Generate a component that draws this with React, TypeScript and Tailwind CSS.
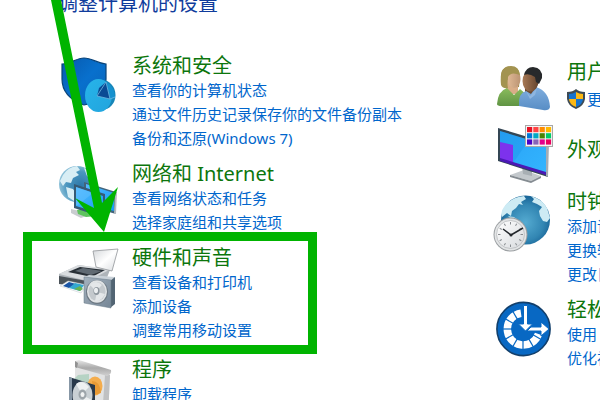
import type { ReactNode } from "react";

interface CategoryProps {
  title: string;
  links?: string[];
  icon: ReactNode;
  highlighted?: boolean;
}

function Category({ title, links = [], icon, highlighted }: CategoryProps) {
  return (
    <section className={highlighted ? "relative flex gap-[14px] pb-1" : "flex gap-[14px]"}>
      {icon}
      <div>
        <CategoryTitle>{title}</CategoryTitle>
        <ul>
          {links.map((link) => (
            <li key={link}>
              <TaskLink>{link}</TaskLink>
            </li>
          ))}
        </ul>
      </div>
      {highlighted && (
        <div className="pointer-events-none absolute -top-[14px] -bottom-2 -left-[35px] w-[294px] border-9 border-[#00b400]" />
      )}
    </section>
  );
}

function CategoryTitle({ children }: { children: ReactNode }) {
  return (
    <h2 className="text-[20px] leading-6">
      <a href="#" className="text-[#0c760c]">{children}</a>
    </h2>
  );
}

function TaskLink({ children }: { children: ReactNode }) {
  return (
    <a href="#" className="block text-[15px] leading-6 text-[#0066cc]">
      {children}
    </a>
  );
}

function SecurityIcon() {
  return (
    <svg viewBox="0 0 60 60" className="h-15 w-15 shrink-0 overflow-visible" aria-hidden="true">
      <defs>
        <linearGradient id="shield" x1="0" y1="0" x2="1" y2="1">
          <stop offset="0" stopColor="#0759ae" />
          <stop offset=".5" stopColor="#0870cd" />
          <stop offset="1" stopColor="#0b63b6" />
        </linearGradient>
        <linearGradient id="pie" x1="0" y1="0" x2="1" y2="1">
          <stop offset="0" stopColor="#27b4ea" />
          <stop offset="1" stopColor="#22a4dd" />
        </linearGradient>
      </defs>
      <path d="M4 10C13 10 18 4 26 4S38 9 48 10V25C48 39 38 49 26 51C12 46 4 37 4 25Z" fill="url(#shield)" stroke="#0a4479" strokeWidth="1.2" />
      <ellipse cx="44" cy="41" rx="13.500" ry="15" fill="#1786b8" />
      <ellipse cx="40.500" cy="41.500" rx="13.500" ry="16.500" fill="url(#pie)" />
      <path d="M39 42L48 28Q57 33 57 44L52 45Z" fill="#1591cf" />
      <path d="M39 42L41 34L48 28L52 45Z" fill="#0a4a94" />
      <path d="M39 42L48 28L52 45ZM52 45L57 43" fill="none" stroke="#70b8df" strokeWidth=".8" />
    </svg>
  );
}

function NetworkIcon() {
  return (
    <svg viewBox="0 0 60 60" className="h-15 w-15 shrink-0 overflow-visible" aria-hidden="true">
      <defs>
        <radialGradient id="globe" cx=".6" cy=".55" r=".6">
          <stop offset="0" stopColor="#2d78aa" />
          <stop offset=".65" stopColor="#4b96bf" />
          <stop offset="1" stopColor="#8fc2d9" />
        </radialGradient>
        <linearGradient id="netScreen" x1="0" y1="0" x2="1" y2="1">
          <stop offset="0" stopColor="#54baff" />
          <stop offset="1" stopColor="#159df4" />
        </linearGradient>
      </defs>
      <circle cx="19" cy="22" r="18" fill="url(#globe)" />
      <path d="M5 13Q10 5 19 4L22 8L18 10L21 13L15 16L13 21L8 20L5 24L2 19ZM26 6L34 11L35 18L29 14ZM8 25L15 27L19 33L16 39L10 35Z" fill="#d8eef5" />
      <path d="M13 47L22 49L31 53L23 56L13 51Z" fill="#c9cdd0" />
      <path d="M19 48L31 46L39 54L28 55L20 52Z" fill="#5fc35f" />
      <path d="M26 20L58 30V52L26 43Z" fill="#42647c" />
      <path d="M28 22L56 31V49L28 41Z" fill="url(#netScreen)" />
      <path d="M57 30L59 30L58 52L56 52Z" fill="#b4bbc0" />
      <path d="M16 22L47 32V56L16 46Z" fill="#365a75" />
      <path d="M18 25L45 34V52L18 44Z" fill="url(#netScreen)" />
      <path d="M18 25L35 31L20 43L18 43Z" fill="#66c2ff" opacity=".5" />
    </svg>
  );
}

function HardwareIcon() {
  return (
    <svg viewBox="0 0 60 60" className="h-15 w-15 shrink-0 overflow-visible" aria-hidden="true">
      <defs>
        <linearGradient id="paper" x1="0" y1="0" x2="1" y2="1">
          <stop offset="0" stopColor="#d4d7da" />
          <stop offset=".5" stopColor="#ffffff" />
          <stop offset="1" stopColor="#d9dcdf" />
        </linearGradient>
        <linearGradient id="speakerBox" x1="0" y1="0" x2="1" y2="1">
          <stop offset="0" stopColor="#a4b1bd" />
          <stop offset="1" stopColor="#758696" />
        </linearGradient>
      </defs>
      <path d="M1 28L21 19L52 24L48 34L29 43L1 37Z" fill="#aeb4b9" />
      <path d="M1 30L29 35L28 42L1 38Z" fill="#4b5359" />
      <path d="M1 28L20 19L53 23L30 35Z" fill="#d9dcdf" />
      <path d="M10 26L22 21L47 24L34 31Z" fill="#282f36" />
      <path d="M17 25L25 22L44 25L33 29Z" fill="#606a73" />
      <path d="M35 5L60 3L54 25L38 21Z" fill="url(#paper)" stroke="#929699" strokeWidth=".8" />
      <path d="M2 40L10 35L29 39L23 47Z" fill="#f7fafb" stroke="#c4cacf" strokeWidth=".5" />
      <path d="M5 40L11 36L18 38L11 42Z" fill="#1a55a6" />
      <path d="M11 42L17 37L26 39L22 45Z" fill="#34a8d0" />
      <path d="M16 43L22 40L25 43L22 45Z" fill="#66b353" />
      <path d="M26 31L31 29L57 31L53 35Z" fill="#c9d1d8" />
      <path d="M52 35L57 31V58L52 62Z" fill="#526473" />
      <path d="M26 31L53 34V62L26 57Z" fill="url(#speakerBox)" stroke="#677887" strokeWidth=".5" />
      <ellipse cx="39" cy="46" rx="11" ry="12" fill="#6d7983" />
      <ellipse cx="39" cy="45.500" rx="10" ry="11.200" fill="#e1e4e6" />
      <ellipse cx="39" cy="45.500" rx="8.500" ry="9.500" fill="#c4c9cd" />
      <path d="M38 45L32 39Q38 33 44 39ZM39 46L47 48Q43 56 37 55Z" fill="#e4e7e9" />
      <ellipse cx="38.500" cy="45" rx="3" ry="4" fill="#8d969d" />
      <ellipse cx="38" cy="44.500" rx="2" ry="2.800" fill="#eceff1" />
    </svg>
  );
}

function ProgramsIcon() {
  return (
    <svg viewBox="0 0 60 60" className="h-15 w-15 shrink-0 overflow-visible" aria-hidden="true">
      <defs>
        <linearGradient id="roller" x1="0" y1="0" x2="0" y2="1">
          <stop offset="0" stopColor="#e8e8e8" />
          <stop offset=".5" stopColor="#aaaaaa" />
          <stop offset="1" stopColor="#d2d2d2" />
        </linearGradient>
      </defs>
      <path d="M17 8L52 18L50 60H17Z" fill="#e2e3e3" />
      <path d="M47 17L52 17L50 60H44Z" fill="#c0c1c2" />
      <path d="M20 17L31 16V32H15L17 20Z" fill="#b6d3c4" />
      <ellipse cx="37" cy="28" rx="7.500" ry="9.500" fill="#f4ad4d" />
      <path d="M34 23Q42 23 43 35L36 37Z" fill="#e89a35" />
      <path d="M17 3L21 2L53 12Q54 16 49 18L17 9Z" fill="url(#roller)" />
      <path d="M17 3L20 5L19 10L17 9Z" fill="#929292" />
      <path d="M11 19L37 27V58L11 51Z" fill="#28384a" />
      <path d="M11 19L14 20V52L11 51Z" fill="#8797a6" />
      <ellipse cx="24.500" cy="37" rx="10" ry="13.500" fill="#c9d0d4" />
      <path d="M24 36L18 26Q24 21 31 29ZM24 37L34 42L29 50Z" fill="#edf0f1" />
      <ellipse cx="24.500" cy="36.500" rx="4" ry="5" fill="#9da5aa" />
      <ellipse cx="24.500" cy="36.500" rx="2" ry="2.500" fill="#f1f3f3" />
    </svg>
  );
}

function UsersIcon() {
  return (
    <svg viewBox="0 0 60 48" className="h-12 w-15 shrink-0 overflow-visible" aria-hidden="true">
      <defs>
        <linearGradient id="greenShirt" x1="0" y1="0" x2="0" y2="1">
          <stop offset="0" stopColor="#8abc5d" />
          <stop offset="1" stopColor="#609444" />
        </linearGradient>
        <linearGradient id="blueShirt" x1="0" y1="0" x2="0" y2="1">
          <stop offset="0" stopColor="#80aede" />
          <stop offset="1" stopColor="#588dc5" />
        </linearGradient>
        <linearGradient id="fairFace" x1="0" y1="0" x2="1" y2="0">
          <stop offset="0" stopColor="#e0b995" />
          <stop offset="1" stopColor="#bb9473" />
        </linearGradient>
        <linearGradient id="darkFace" x1="0" y1="0" x2="1" y2="0">
          <stop offset="0" stopColor="#a97a56" />
          <stop offset="1" stopColor="#63432d" />
        </linearGradient>
      </defs>
      <path d="M9 24Q5 8 15 7Q26 5 27 16L26 27L14 29Z" fill="#9c8a48" />
      <path d="M14 20H25V34H14Z" fill="#d9ad87" />
      <path d="M4 44Q5 31 14 28L21 35L27 29L34 35L29 46H9Q4 46 4 44Z" fill="url(#greenShirt)" />
      <ellipse cx="21" cy="19" rx="6.500" ry="9" fill="url(#fairFace)" />
      <path d="M8 25Q6 6 18 6Q26 6 27 15Q18 11 15 17Q14 24 15 28Q10 29 8 25Z" fill="#a39350" />
      <path d="M32 22H44V34L37 36L32 33Z" fill="#6d492f" />
      <path d="M26 46Q25 33 33 31L38 34L43 27Q56 31 57 47Q56 51 50 50Z" fill="url(#blueShirt)" />
      <ellipse cx="37.500" cy="21" rx="8" ry="10.500" fill="url(#darkFace)" />
      <path d="M31 15Q33 7 40 7Q50 8 49 18L46 24L43 22L42 17Q36 13 31 15Z" fill="#27292b" />
      <path d="M33 31L37 36L44 28L42 35L37 39Z" fill="#8fb6e0" />
    </svg>
  );
}

function ShieldIcon() {
  return (
    <svg viewBox="0 0 18 20" className="h-5 w-[18px] shrink-0" aria-hidden="true">
      <path d="M0 3Q6 3 9 0Q12 3 18 3V10Q17 17 9 20Q1 17 0 10Z" fill="#3e4b55" />
      <path d="M2 5Q6 5 9 3V10H2Z" fill="#1673cf" />
      <path d="M9 3Q12 5 16 5V10H9Z" fill="#fcb814" />
      <path d="M2 10H9V18Q2 15 2 10Z" fill="#fcb814" />
      <path d="M9 10H16Q16 15 9 18Z" fill="#1673cf" />
    </svg>
  );
}

const swatches = [
  "#e81123", "#ff4343", "#ff8c00", "#ffb900",
  "#0078d7", "#00a9c4", "#498205", "#00cc6a",
  "#4b00c8", "#8764b8", "#e3008c", "#ea005e",
];

function AppearanceIcon() {
  return (
    <svg viewBox="0 0 60 52" className="h-13 w-15 shrink-0 overflow-visible" aria-hidden="true">
      <defs>
        <linearGradient id="monitor" x1="0" y1="0" x2="1" y2="1">
          <stop offset="0" stopColor="#29a2f5" />
          <stop offset="1" stopColor="#33b5ff" />
        </linearGradient>
      </defs>
      <path d="M17 49L31 44L48 50L38 55Z" fill="#c3c8cc" />
      <path d="M17 49L38 55L48 50V52L38 57L17 51Z" fill="#858c92" />
      <path d="M29 40L39 43V50L30 48Z" fill="#a8afb4" />
      <path d="M5 2L55 17V51L5 35Z" fill="#344654" />
      <path d="M7 5L53 19V48L7 33Z" fill="url(#monitor)" />
      <path d="M7 5L36 14L20 37L7 33Z" fill="#178fe3" opacity=".3" />
      <path d="M7 16L20 19V37L7 33Z" fill="#7d32ed" />
      <path d="M7 32L53 46V49L7 35Z" fill="#4b18b5" />
      <path d="M53 17H56L55 51L53 50Z" fill="#a5adb4" />
      <rect x="32.500" y="-.5" width="27" height="21" fill="#f5f5f5" stroke="#a7a7a7" />
      {swatches.map((color, i) => (
        <rect key={color} x={34 + (i % 4) * 6.3} y={1 + Math.floor(i / 4) * 6.2} width="5.200" height="5.200" fill={color} />
      ))}
    </svg>
  );
}

function ClockIcon() {
  const ticks = Array.from({ length: 12 }, (_, i) => i * 30);

  return (
    <svg viewBox="0 0 60 60" className="h-15 w-15 shrink-0 overflow-visible" aria-hidden="true">
      <defs>
        <radialGradient id="world" cx=".5" cy=".55" r=".52">
          <stop offset="0" stopColor="#55abd1" />
          <stop offset=".7" stopColor="#3286b3" />
          <stop offset="1" stopColor="#1b6799" />
        </radialGradient>
        <linearGradient id="clockFace" x1="0" y1="0" x2="1" y2="1">
          <stop offset="0" stopColor="#ffffff" />
          <stop offset="1" stopColor="#d7dadd" />
        </linearGradient>
      </defs>
      <circle cx="32.500" cy="30" r="24.500" fill="url(#world)" />
      <path d="M11 17Q18 7 31 6L33 9L28 12L30 15L26 14L23 18L19 21L18 26L14 23L9 27Q7 22 11 17Z" fill="#cdebf4" />
      <path d="M38 6Q49 9 54 18L57 28L54 32L50 31L47 26L46 21L49 17L44 14L39 12L41 9Z" fill="#cdebf4" />
      <path d="M15 26L21 27L25 30L20 31Z" fill="#b8dfec" />
      <circle cx="17.500" cy="44.500" r="17" fill="#9b9fa2" />
      <circle cx="17.500" cy="44.500" r="16" fill="#e3e5e6" />
      <circle cx="17.500" cy="44.500" r="14" fill="url(#clockFace)" stroke="#b7babd" strokeWidth=".8" />
      {ticks.map((angle) => (
        <path key={angle} d="M17.500 32V34.500" stroke="#888c90" strokeWidth="1" transform={`rotate(${angle} 17.500 44.500)`} />
      ))}
      <path d="M10 39L18 45L30 38" fill="none" stroke="#24282c" strokeWidth="1.500" />
      <circle cx="18" cy="45" r="1.500" fill="#24282c" />
    </svg>
  );
}

function EaseOfAccessIcon() {
  const gaps = [90, 120, 150, 180, 210, 240, 270, 300, 330];

  return (
    <svg viewBox="0 0 60 60" className="h-15 w-15 shrink-0 overflow-visible" aria-hidden="true">
      <circle cx="30.500" cy="31" r="26.600" fill="#0868c3" stroke="#123f6b" strokeWidth="1.600" />
      <path d="M28 15.200A16 16 0 1 0 45.500 36" fill="none" stroke="#ffffff" strokeWidth="7.500" />
      {gaps.map((angle) => (
        <path key={angle} d="M30 9V21" stroke="#0868c3" strokeWidth="1.200" transform={`rotate(${angle} 30 31)`} />
      ))}
      <path d="M30.500 7.500H34.500V26H39.500L32.500 33L25.500 26H30.500Z" fill="#ffffff" stroke="#0868c3" strokeWidth="1" />
      <path d="M34 33L38 29H48V24L56 31L48 38V33Z" fill="#ffffff" stroke="#0868c3" strokeWidth="1" />
    </svg>
  );
}

export default function App() {
  return (
    <main className="relative h-screen overflow-hidden bg-white pl-[58px] font-['Noto_Sans','Noto_Sans_CJK_SC',sans-serif] whitespace-nowrap">
      <h1 className="-mt-2 mb-[38px] text-[20px] leading-6 text-[#103c9c]">调整计算机的设置</h1>

      <div className="grid grid-cols-[minmax(0,1fr)_107px]">
        <div className="flex flex-col gap-3">
          <Category
            title="系统和安全"
            links={["查看你的计算机状态", "通过文件历史记录保存你的文件备份副本", "备份和还原(Windows 7)"]}
            icon={<SecurityIcon />}
          />
          <Category
            title="网络和 Internet"
            links={["查看网络状态和任务", "选择家庭组和共享选项"]}
            icon={<NetworkIcon />}
          />
          <Category
            title="硬件和声音"
            links={["查看设备和打印机", "添加设备", "调整常用移动设置"]}
            icon={<HardwareIcon />}
            highlighted
          />
          <Category title="程序" links={["卸载程序"]} icon={<ProgramsIcon />} />
        </div>

        <div className="flex flex-col gap-3 pt-1.5">
          <section className="flex gap-[14px]">
            <UsersIcon />
            <div>
              <CategoryTitle>用户帐户</CategoryTitle>
              <div className="flex h-[30px] items-center gap-0.5">
                <ShieldIcon />
                <TaskLink>更改帐户类型</TaskLink>
              </div>
            </div>
          </section>
          <section className="flex gap-[14px]">
            <AppearanceIcon />
            <div className="pt-3">
              <CategoryTitle>外观和个性化</CategoryTitle>
            </div>
          </section>
          <Category
            title="时钟、语言和区域"
            links={["添加语言", "更换输入法", "更改日期、时间或数字格式"]}
            icon={<ClockIcon />}
          />
          <Category
            title="轻松使用"
            links={["使用 Windows 建议的设置", "优化视觉显示"]}
            icon={<EaseOfAccessIcon />}
          />
        </div>
      </div>

      {/* arrow pointing at the highlighted category */}
      <svg viewBox="0 0 120 240" className="pointer-events-none absolute top-0 left-0 h-60 w-30" aria-hidden="true">
        <path d="M51 0H61L102 203L118 187L104 232L75 198L94 208Z" fill="#00b400" />
      </svg>
    </main>
  );
}
